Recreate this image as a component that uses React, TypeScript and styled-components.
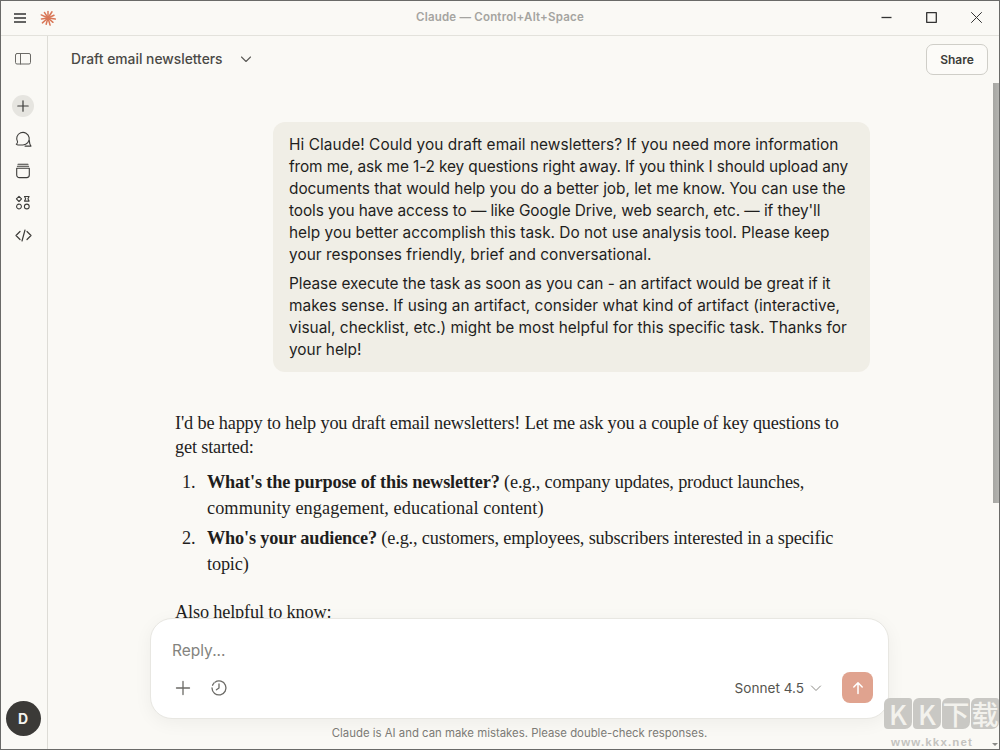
import React from "react";
import styled, { createGlobalStyle } from "styled-components";

const Global = createGlobalStyle`
  html, body { margin: 0; padding: 0; width: 1000px; height: 750px; overflow: hidden; background: #faf9f5; }
  * { box-sizing: border-box; }
`;
const sans = `"Inter", "Noto Sans", sans-serif`;
const serif = `"Liberation Serif", serif`;

const Win = styled.div`
  width: 1000px; height: 750px; display: flex; flex-direction: column; position: relative;
  border: 1px solid #6a6a68; background: #faf9f5; overflow: hidden;
  font-family: ${sans};
`;
const TitleBar = styled.header`
  height: 35px; flex: none; display: flex; align-items: center; position: relative;
  border-bottom: 1px solid #e3e2dc; padding: 0 0 1px 12px;
`;
const Center = styled.div`
  position: absolute; left: 0; right: 0; top: 8px; text-align: center; color: #a5a4a0;
  font-size: 11.5px; font-weight: 600; letter-spacing: 0.2px; line-height: 16px;
`;
const Controls = styled.div`
  margin-left: auto; display: flex; align-items: center; gap: 34px; padding-right: 17px; color: #333;
`;
const Body = styled.div`flex: 1; min-height: 0; display: flex;`;
const Side = styled.nav`
  width: 47px; flex: none; border-right: 1px solid #dddcd6; display: flex; flex-direction: column;
  align-items: center; padding: 14px 2px 0 0; color: #3d3d3a;
`;
const SideTop = styled.div`height: 18px; margin-bottom: 27px; color: #6b6a66;`;
const SideItem = styled.div<{ $active?: boolean }>`
  width: 22px; height: 22px; margin-bottom: ${p => (p.$active ? "11px" : "10px")}; border-radius: 50%; display: flex; align-items: center; justify-content: center;
  background: ${p => (p.$active ? "#e6e5e0" : "transparent")};
`;
const Avatar = styled.div`
  margin-top: auto; margin-bottom: 13px; width: 35px; height: 35px; border-radius: 50%; background: #3b3a37; color: #f5f4ef;
  display: flex; align-items: center; justify-content: center; font-size: 14px; font-weight: 700;
`;
const Main = styled.main`flex: 1; min-width: 0; position: relative; display: flex; flex-direction: column;`;
const Head = styled.div`
  height: 46px; flex: none; display: flex; align-items: center; padding: 0 11px 0 23px;
`;
const ChatTitle = styled.div`font-size: 13.82px; font-weight: 500; color: #4a4945; margin: -1px 17px 0 0; line-height: 20px;`;
const TitleChev = styled.span`display: flex; color: #5c5b57; margin-top: -1px;`;
const Share = styled.div`
  margin-left: auto; width: 62px; height: 31px; border: 1px solid #cfcec8; border-radius: 7px; display: flex; align-items: center;
  justify-content: center; font-size: 12px; font-weight: 600; color: #3d3d3a; background: #fcfbf8;
`;
const Scroll = styled.div`flex: 1; min-height: 0; overflow: hidden; padding: 40px 0 0 127px;`;
const Bubble = styled.div`
  margin-left: 98px; width: 597px; background: #f0eee6; border-radius: 12px; padding: 12px 16px 0 16px; height: 250px;
  font-size: 15.4px; line-height: 22px; color: #1f1e1d;
  p { margin: 0 0 7px; white-space: nowrap; }
`;
const Line = styled.span<{ $ls?: number }>`
  display: block; letter-spacing: ${p => p.$ls ?? 0}px;
`;
const Answer = styled.div`
  margin-top: 39px; font-family: ${serif}; font-size: 18.3px; letter-spacing: -0.17px; color: #1f1e1d; line-height: 24px; white-space: nowrap;
  p { margin: 0; }
`;
const List = styled.ol`
  margin: 11px 0 0; padding: 0; list-style: none;
`;
const Li = styled.li`
  display: grid; grid-template-columns: 32px 1fr; line-height: 25.5px; margin-bottom: 5px;
`;
const Num = styled.span`padding-left: 7px;`;
const Also = styled.p`&& { margin-top: 23px; }`;
const Composer = styled.div`
  position: absolute; left: 102px; top: 582px; width: 739px; height: 101px; background: #fff; border: 1px solid #e8e7e2;
  border-radius: 22px; box-shadow: 0 4px 18px rgba(0,0,0,.05); padding: 21px 15px 0 21px;
`;
const Placeholder = styled.div`font-size: 15.5px; line-height: 22px; color: #84837e;`;
const Row = styled.div`display: flex; align-items: center; margin-top: 10px; color: #6b6a66;`;
const Icons = styled.div`display: flex; gap: 19px; margin-left: 3px; align-items: center;`;
const Model = styled.div`margin-left: auto; margin-right: 20px; display: flex; align-items: center; gap: 6px; font-size: 13.6px; color: #55544f;`;
const ModelChev = styled.span`display: flex; color: #8d8c87;`;
const Send = styled.div`
  width: 31px; height: 31px; border-radius: 8px; background: #e0a38f; color: #fff; display: flex; align-items: center; justify-content: center;
`;
const Note = styled.div`
  position: absolute; left: 0; right: 0; top: 690px; padding-right: 8px; text-align: center; font-size: 11.38px; line-height: 14px; color: #7c7b76;
`;
const ScrollThumb = styled.div`
  position: absolute; right: 0; top: 47px; width: 6px; height: 420px;
  background: linear-gradient(90deg, #a6a6a2, #b4b4b0);
`;
const Mark = styled.div`
  position: absolute; right: 0; bottom: 20px; display: flex; gap: 1px;
`;
const Tile = styled.span`
  width: 28px; height: 31px; display: flex; align-items: center; justify-content: center;
  background: #c9c8c4; color: #f3f2ed; border-radius: 6px 3px 7px 4px;
  font-family: "Noto Sans CJK SC", sans-serif; font-size: 27px; font-weight: 500; line-height: 1;
`;
const MarkUrl = styled.div`
  position: absolute; right: 26px; bottom: 0; font-family: "Liberation Sans", sans-serif; font-size: 11.5px; font-weight: 700; color: #c4c3bf; letter-spacing: 1.15px; line-height: 14px;
`;
const ArrowDown = styled.div`
  position: absolute; right: 1px; bottom: 3px; width: 0; height: 0;
  border-left: 3px solid transparent; border-right: 3px solid transparent; border-top: 3px solid #8a8a86;
`;

const s = { fill: "none", stroke: "currentColor", strokeLinecap: "round" as const, strokeLinejoin: "round" as const };

const Burger = () => (
  <svg width="14" height="14" viewBox="0 0 14 14" {...s} strokeWidth={1.6} color="#333" strokeLinecap="butt"><path d="M1 3h12M1 7h12M1 11h12" /></svg>
);
const Logo = () => {
  const a = Array.from({ length: 11 }, (_, i) => (i * 360) / 11);
  return (
    <svg width="16" height="16" viewBox="0 0 16 16" style={{ marginLeft: 13 }}>
      {a.map((d, i) => (
        <line key={d} x1="8" y1="8" x2="8" y2={i % 2 ? 0.6 : 1.4} stroke="#d97757" strokeWidth="1.5" strokeLinecap="round" transform={`rotate(${d} 8 8)`} />
      ))}
    </svg>
  );
};
const Chev = ({ size = 12, w = 1.2 }: { size?: number; w?: number }) => (
  <svg width={size} height={size} viewBox="0 0 12 12" {...s} strokeWidth={w}><path d="M1.5 4l4.5 4.5L10.5 4" /></svg>
);

export default function App() {
  return (
    <Win>
      <Global />
      <TitleBar>
        <Burger />
        <Logo />
        <Center>Claude — Control+Alt+Space</Center>
        <Controls>
          <svg width="11" height="11" viewBox="0 0 11 11" {...s} strokeWidth={1.3} strokeLinecap="butt"><path d="M0.5 5.5h10" /></svg>
          <svg width="11" height="11" viewBox="0 0 11 11" {...s} strokeWidth={1.3}><rect x=".7" y=".7" width="9.6" height="9.6" /></svg>
          <svg width="11" height="11" viewBox="0 0 11 11" {...s} strokeWidth={1}><path d="M.5.5l10 10M10.5.5l-10 10" /></svg>
        </Controls>
      </TitleBar>
      <Body>
        <Side>
          <SideTop>
            <svg width="16" height="18" viewBox="0 0 16 18" {...s} strokeWidth={1}><rect x=".5" y="3.5" width="15" height="10.5" rx="1.5" /><path d="M5.5 3.5v10.5" /></svg>
          </SideTop>
          <SideItem $active>
            <svg width="12" height="12" viewBox="0 0 12 12" {...s} strokeWidth={1.2}><path d="M6 .8v10.4M.8 6h10.4" /></svg>
          </SideItem>
          <SideItem>
            <svg width="17" height="17" viewBox="0 0 17 17" {...s} strokeWidth={1.1}><path d="M2.6 11A6.3 6.3 0 1 1 8 14H3.2c-.9 0-1.4-.3-1.9-.8.7-.4 1.1-1.2 1.3-2.2z" /><path d="M14.3 9.6c.1 2 .5 4 1.7 5.5H10" /></svg>
          </SideItem>
          <SideItem>
            <svg width="16" height="16" viewBox="0 0 16 16" {...s} strokeWidth={1.1}><path d="M3 1.2h10M2.4 3.2h11.2" /><path d="M1.7 5.2h12.6v6.8a2.6 2.6 0 0 1-2.6 2.6H4.3A2.6 2.6 0 0 1 1.7 12z" /></svg>
          </SideItem>
          <SideItem>
            <svg width="16" height="16" viewBox="0 0 16 16" {...s} strokeWidth={1.1}>
              <path d="M4 1.3l2.6 2.6L4 6.5 1.4 3.9z" /><path d="M9.5 1.5h4.6l-1.2 2.3 1.2 2.3H9.5l1.2-2.3z" />
              <circle cx="4" cy="11.5" r="2.4" strokeDasharray="2 .8" /><circle cx="11.8" cy="11.5" r="2.4" />
            </svg>
          </SideItem>
          <SideItem>
            <svg width="17" height="17" viewBox="0 0 17 17" {...s} strokeWidth={1.2}><path d="M5 4.5L1 8.5l4 4M12 4.5l4 4-4 4M10 3L7 14" /></svg>
          </SideItem>
          <Avatar>D</Avatar>
        </Side>
        <Main>
          <Head>
            <ChatTitle>Draft email newsletters</ChatTitle>
            <TitleChev><Chev size={12} w={1.1} /></TitleChev>
            <Share>Share</Share>
          </Head>
          <Scroll>
            <Bubble>
              <p>
                <Line $ls={0.067}>Hi Claude! Could you draft email newsletters? If you need more information</Line>
                <Line $ls={-0.114}>from me, ask me 1-2 key questions right away. If you think I should upload any</Line>
                <Line $ls={-0.026}>documents that would help you do a better job, let me know. You can use the</Line>
                <Line $ls={-0.08}>tools you have access to — like Google Drive, web search, etc. — if they'll</Line>
                <Line>help you better accomplish this task. Do not use analysis tool. Please keep</Line>
                <Line $ls={0.04}>your responses friendly, brief and conversational.</Line>
              </p>
              <p>
                <Line $ls={-0.05}>Please execute the task as soon as you can - an artifact would be great if it</Line>
                <Line $ls={0.05}>makes sense. If using an artifact, consider what kind of artifact (interactive,</Line>
                <Line $ls={0.012}>visual, checklist, etc.) might be most helpful for this specific task. Thanks for</Line>
                <Line>your help!</Line>
              </p>
            </Bubble>
            <Answer>
              <p>I'd be happy to help you draft email newsletters! Let me ask you a couple of key questions to<br />get started:</p>
              <List>
                <Li>
                  <Num>1.</Num>
                  <span><b>What's the purpose of this newsletter?</b> (e.g., company updates, product launches,<Line $ls={0.06}>community engagement, educational content)</Line></span>
                </Li>
                <Li>
                  <Num>2.</Num>
                  <span><b>Who's your audience?</b> (e.g., customers, employees, subscribers interested in a specific<Line $ls={-0.17}>topic)</Line></span>
                </Li>
              </List>
              <Also>Also helpful to know:</Also>
            </Answer>
          </Scroll>
          <ScrollThumb />
          <Composer>
            <Placeholder>Reply...</Placeholder>
            <Row>
              <Icons>
                <svg width="16" height="16" viewBox="0 0 16 16" {...s} strokeWidth={1.3}><path d="M8 1.5v13M1.5 8h13" /></svg>
                <svg width="18" height="18" viewBox="0 0 18 18" {...s} strokeWidth={1.3}><path d="M5 3.2A7 7 0 1 1 2 9" /><path d="M2.6 6.2l.6-1M3.8 4.2l.2-.2" /><path d="M9 5v4l-2.6 1.8" /></svg>
              </Icons>
              <Model>Sonnet 4.5 <ModelChev><Chev size={12} w={1} /></ModelChev></Model>
              <Send>
                <svg width="14" height="14" viewBox="0 0 14 14" {...s} strokeWidth={1.5}><path d="M7 12.5V1.8M2.8 6L7 1.8 11.2 6" /></svg>
              </Send>
            </Row>
          </Composer>
          <Note>Claude is AI and can make mistakes. Please double-check responses.</Note>
        </Main>
      </Body>
      <Mark>
        <Tile>K</Tile><Tile>K</Tile><Tile>下</Tile><Tile>载</Tile>
      </Mark>
      <MarkUrl>www.kkx.net</MarkUrl>
      <ArrowDown />
    </Win>
  );
}
